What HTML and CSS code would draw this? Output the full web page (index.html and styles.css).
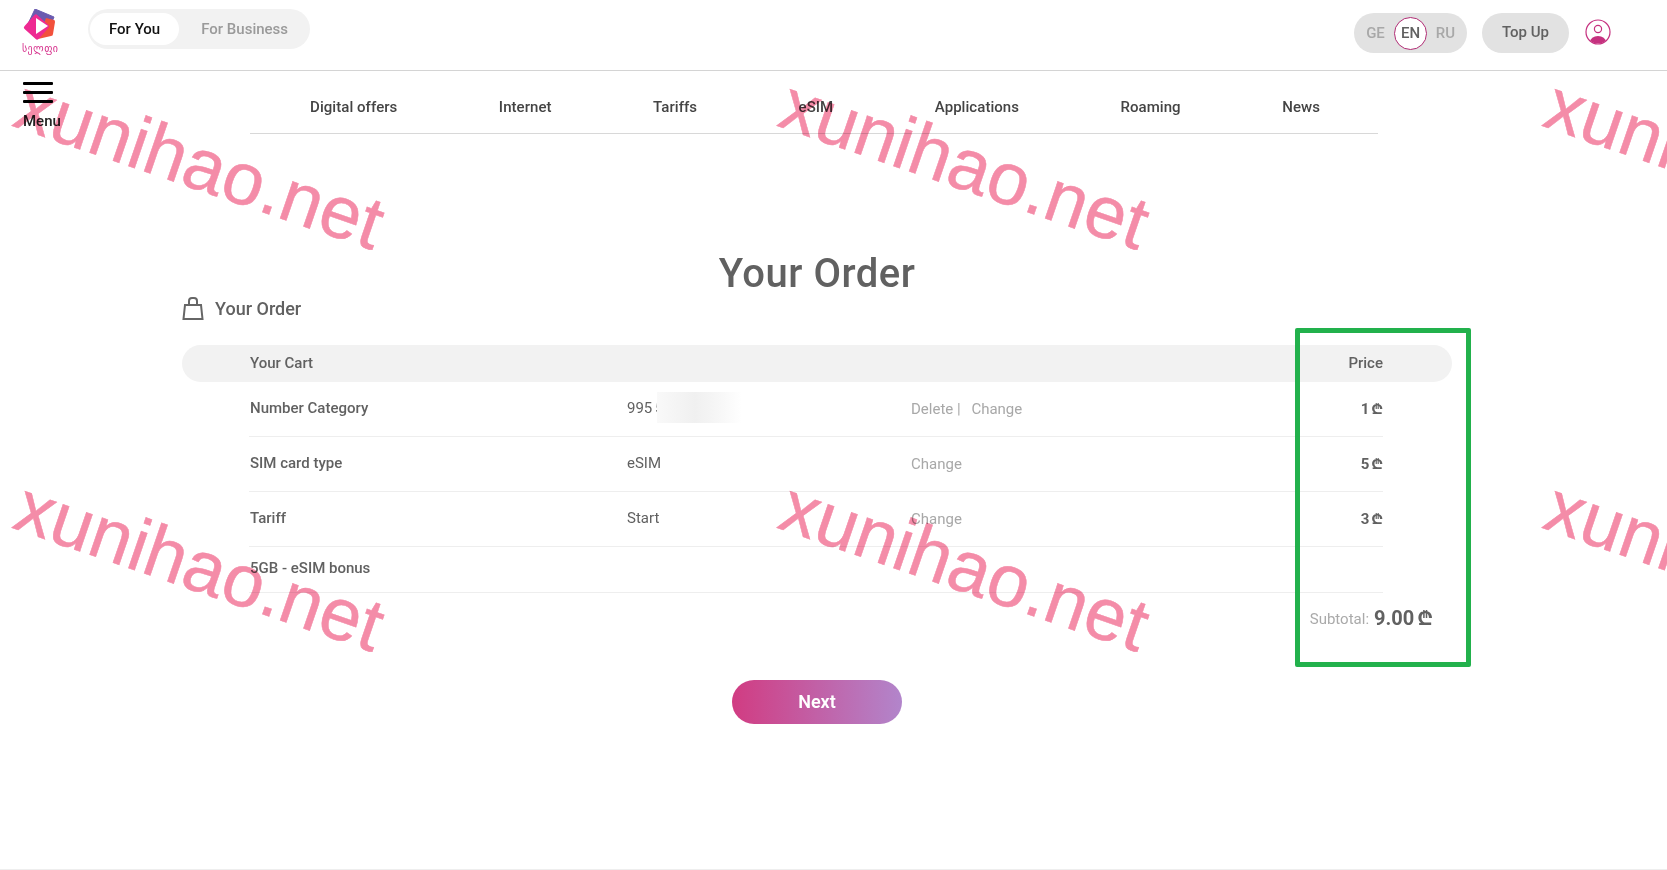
FILE: index.html
```html
<!DOCTYPE html>
<html lang="en">
<head>
    <meta charset="UTF-8">
    <meta name="viewport" content="width=device-width, initial-scale=1.0">
    <title>Your Order</title>
    <link rel="stylesheet" href="styles.css">
</head>
<body>

    <header class="topbar">
        <div class="topbar-left">
            <a class="logo" href="#">
                <svg width="36" height="34" viewBox="0 0 36 34">
                    <path d="M13 0 L32 8 L25 25 L5 17 Z" fill="#6a5bb0" stroke="#6a5bb0" stroke-linejoin="round"/>
                    <path d="M24 9 L32 11 Q33 11 33 13 L31 25 Q31 27 29 27 L16 30 Z" fill="#f2513c"/>
                    <rect x="5" y="8.500" width="19" height="19" rx="2" fill="#ee2a92" transform="rotate(42 14.500 18)"/>
                    <path d="M14 9 L26 17 L14 25 Z" fill="#fff"/>
                </svg>
                <span class="logo-text">სელფი</span>
            </a>
            <div class="segment">
                <a class="segment-item active" href="#">For You</a>
                <a class="segment-item" href="#">For Business</a>
            </div>
        </div>
        <div class="topbar-right">
            <div class="lang">
                <a class="lang-item" href="#">GE</a>
                <a class="lang-item active" href="#">EN</a>
                <a class="lang-item" href="#">RU</a>
            </div>
            <a class="topup" href="#">Top Up</a>
            <a class="user" href="#">
                <svg width="26" height="26" viewBox="0 0 26 26">
                    <defs><clipPath id="userClip"><circle cx="13" cy="13" r="11.5"/></clipPath></defs>
                    <circle cx="13" cy="13" r="12" fill="#fff" stroke="#c5317f" stroke-width="1.2"/>
                    <circle cx="13" cy="10" r="3.6" fill="none" stroke="#c5317f" stroke-width="1.2"/>
                    <ellipse cx="13" cy="23" rx="8" ry="6" fill="#c5317f" clip-path="url(#userClip)"/>
                </svg>
            </a>
        </div>
    </header>

    <div class="subbar">
        <button class="menu" type="button">
            <span class="menu-bars"><i></i><i></i><i></i></span>
            <span class="menu-label">Menu</span>
        </button>
        <nav class="mainnav">
            <a href="#">Digital offers</a>
            <a href="#">Internet</a>
            <a href="#">Tariffs</a>
            <a href="#">eSIM</a>
            <a href="#">Applications</a>
            <a href="#">Roaming</a>
            <a href="#">News</a>
        </nav>
    </div>

    <main class="order">
        <h1>Your Order</h1>
        <h2 class="order-sub">
            <svg width="22" height="23" viewBox="0 0 22 23">
                <path d="M3 8 H19 L20.500 22 H1.500 Z" fill="none" stroke="#666" stroke-width="2"/>
                <path d="M7 8 V4 Q7 1 10 1 H12 Q15 1 15 4 V8" fill="none" stroke="#666" stroke-width="2"/>
            </svg>
            Your Order
        </h2>

        <div class="cart-head">
            <span>Your Cart</span>
            <span>Price</span>
        </div>
        <div class="cart-row">
            <span class="cell-name">Number Category</span>
            <span class="cell-value">995 5<span class="blur"></span></span>
            <span class="cell-action">Delete | <span class="action-next">Change</span></span>
            <span class="cell-price">1 ₾</span>
        </div>
        <div class="cart-row">
            <span class="cell-name">SIM card type</span>
            <span class="cell-value">eSIM</span>
            <span class="cell-action">Change</span>
            <span class="cell-price">5 ₾</span>
        </div>
        <div class="cart-row">
            <span class="cell-name">Tariff</span>
            <span class="cell-value">Start</span>
            <span class="cell-action">Change</span>
            <span class="cell-price">3 ₾</span>
        </div>
        <div class="cart-row bonus">
            <span class="cell-name">5GB - eSIM bonus</span>
        </div>
        <div class="subtotal">
            <span class="subtotal-label">Subtotal:</span>
            <span class="subtotal-value">9.00 ₾</span>
        </div>

        <div class="next-wrap">
            <a class="next" href="#">Next</a>
        </div>
    </main>

    <footer class="pagefoot"></footer>

    <!-- annotation and watermark sit over the page -->
    <div class="price-box"></div>
    <div class="watermarks">
        <span>xunihao.net</span><span>xunihao.net</span><span>xunihao.net</span>
        <span>xunihao.net</span><span>xunihao.net</span><span>xunihao.net</span>
    </div>

</body>
</html>
```

FILE: styles.css
```css
* {
    box-sizing: border-box;
}

html, body {
    height: 100%;
}

body {
    margin: 0;
    font-family: Roboto, "Noto Sans", Arial, sans-serif;
    color: #616161;
    background-color: #fff;
    position: relative;
    overflow: hidden;
}

a {
    color: inherit;
    text-decoration: none;
}

/* Top bar */
.topbar {
    height: 71px;
    border-bottom: 1px solid #d4d4d4;
    display: flex;
    justify-content: space-between;
    padding: 9px 56px 0 22px;
}

.topbar-left {
    display: flex;
    gap: 31px;
}

.logo {
    width: 35px;
    display: flex;
    flex-direction: column;
    align-items: flex-start;
}

.logo-text {
    font-family: "DejaVu Sans", sans-serif;
    font-size: 10px;
    line-height: 11px;
    letter-spacing: 0.4px;
    color: #d6308c;
    white-space: nowrap;
}

.segment {
    width: 222px;
    height: 40px;
    background-color: #f2f2f2;
    border-radius: 20px;
    padding: 4px 2px;
    display: flex;
    font-size: 15px;
    font-weight: 500;
}

.segment-item {
    color: #9a9a9a;
    display: flex;
    align-items: center;
    justify-content: center;
    padding: 0 22px;
    border-radius: 16px;
    white-space: nowrap;
}

.segment-item.active {
    background-color: #fff;
    color: #111;
    padding: 0 19px;
}

.topbar-right {
    display: flex;
    gap: 15px;
    padding-top: 4px;
}

.lang {
    width: 113px;
    height: 40px;
    background-color: #e2e2e2;
    border-radius: 20px;
    display: flex;
    align-items: center;
    justify-content: center;
    gap: 2px;
    font-size: 15px;
    font-weight: 500;
}

.lang-item {
    width: 33px;
    height: 33px;
    padding-bottom: 1px;
    display: flex;
    align-items: center;
    justify-content: center;
    color: #a8a8a8;
}

.lang-item.active {
    background-color: #fff;
    border: 1px solid #b02c74;
    border-radius: 50%;
    color: #616161;
}

.topup {
    width: 87px;
    height: 40px;
    padding-bottom: 2px;
    background-color: #e2e2e2;
    border-radius: 20px;
    display: flex;
    align-items: center;
    justify-content: center;
    font-size: 15px;
    font-weight: 500;
}

.user {
    padding-top: 6px;
    margin-left: 1px;
}

/* Second row */
.subbar {
    height: 63px;
    padding-left: 23px;
    display: flex;
}

.menu {
    width: 227px;
    padding: 11px 0 0;
    border: none;
    background: none;
    font: inherit;
    font-size: 15px;
    font-weight: 500;
    color: #222;
    text-align: left;
    display: flex;
    flex-direction: column;
}

.menu-bars {
    width: 30px;
    display: flex;
    flex-direction: column;
    gap: 6px;
}

.menu-bars i {
    height: 3px;
    background-color: #000;
    border-radius: 1px;
}

.menu-label {
    margin-top: 9px;
    line-height: 18px;
}

.mainnav {
    width: 1128px;
    height: 63px;
    padding: 10px 0 0 2px;
    border-bottom: 1px solid #d8d8d8;
    display: flex;
    align-items: center;
    justify-content: center;
    gap: 101.500px;
    font-size: 15px;
    font-weight: 500;
    letter-spacing: 0.05px;
    color: #444;
}

/* Order */
.order {
    width: 1270px;
    margin-left: 182px;
    padding-top: 118px;
}

h1 {
    margin: 0;
    font-size: 40px;
    line-height: 44px;
    font-weight: 500;
    letter-spacing: 0.5px;
    text-align: center;
    color: #616161;
}

.order-sub {
    margin: 0;
    height: 25px;
    display: flex;
    align-items: center;
    gap: 11px;
    font-size: 18px;
    font-weight: 500;
    color: #616161;
}

.cart-head {
    margin-top: 24px;
    height: 37px;
    padding: 0 69px 1px 68px;
    background-color: #f2f2f2;
    border-radius: 19px;
    display: flex;
    align-items: center;
    justify-content: space-between;
    font-size: 15px;
    font-weight: 500;
}

.cart-row {
    margin: 0 69px 0 67px;
    height: 55px;
    border-bottom: 1px solid #eeeeee;
    padding: 0 0 2px 1px;
    display: grid;
    grid-template-columns: 377px 284px 1fr auto;
    align-items: center;
    font-size: 15px;
}

.cart-row.bonus {
    height: 46px;
    padding-bottom: 4px;
}

.cell-name {
    font-weight: 500;
}

.cell-action {
    padding-top: 2px;
    color: #a8a8a8;
}

.action-next {
    margin-left: 7px;
}

.cell-value {
    position: relative;
    word-spacing: -1px;
}

.blur {
    position: absolute;
    left: 30px;
    top: -7px;
    width: 85px;
    height: 31px;
    background: linear-gradient(90deg, #f9f9f9 0%, #f0f0f0 45%, #f6f6f6 70%, #fff 100%);
}

.cell-price {
    font-weight: 700;
    word-spacing: -2px;
}

.subtotal {
    margin: 12px 19px 0 0;
    height: 26px;
    display: flex;
    align-items: center;
    justify-content: flex-end;
    gap: 5px;
}

.subtotal-label {
    padding-top: 2px;
    font-size: 15px;
    color: #aaa;
}

.subtotal-value {
    padding-bottom: 1px;
    font-size: 20px;
    font-weight: 700;
    word-spacing: -2px;
}

.next-wrap {
    margin-top: 49px;
    display: flex;
    justify-content: center;
}

.next {
    width: 170px;
    height: 44px;
    padding-bottom: 1px;
    border-radius: 22px;
    background: linear-gradient(90deg, #d13c82, #b285cb);
    color: #fff;
    font-size: 18px;
    font-weight: 600;
    display: flex;
    align-items: center;
    justify-content: center;
}

.pagefoot {
    position: absolute;
    left: 0;
    right: 0;
    bottom: 0;
    border-top: 1px solid #eee;
}

/* Green annotation drawn on the screenshot */
.price-box {
    position: absolute;
    left: 1295px;
    top: 328px;
    width: 176px;
    height: 339px;
    border: 5px solid #22b14c;
    border-radius: 2px;
}

/* Watermark tiles */
.watermarks {
    position: absolute;
    inset: 0;
    overflow: hidden;
    padding: 67px 0 0 31px;
    display: grid;
    grid-template-columns: repeat(3, 765px);
    grid-auto-rows: 402px;
    font-family: "Liberation Sans", Arial, sans-serif;
    font-size: 74px;
    line-height: 74px;
    color: #f48ca8;
    -webkit-text-stroke: 0.5px #f48ca8;
    mix-blend-mode: multiply;
    pointer-events: none;
}

.watermarks span {
    transform: rotate(19deg);
    transform-origin: left top;
    white-space: nowrap;
}
```
